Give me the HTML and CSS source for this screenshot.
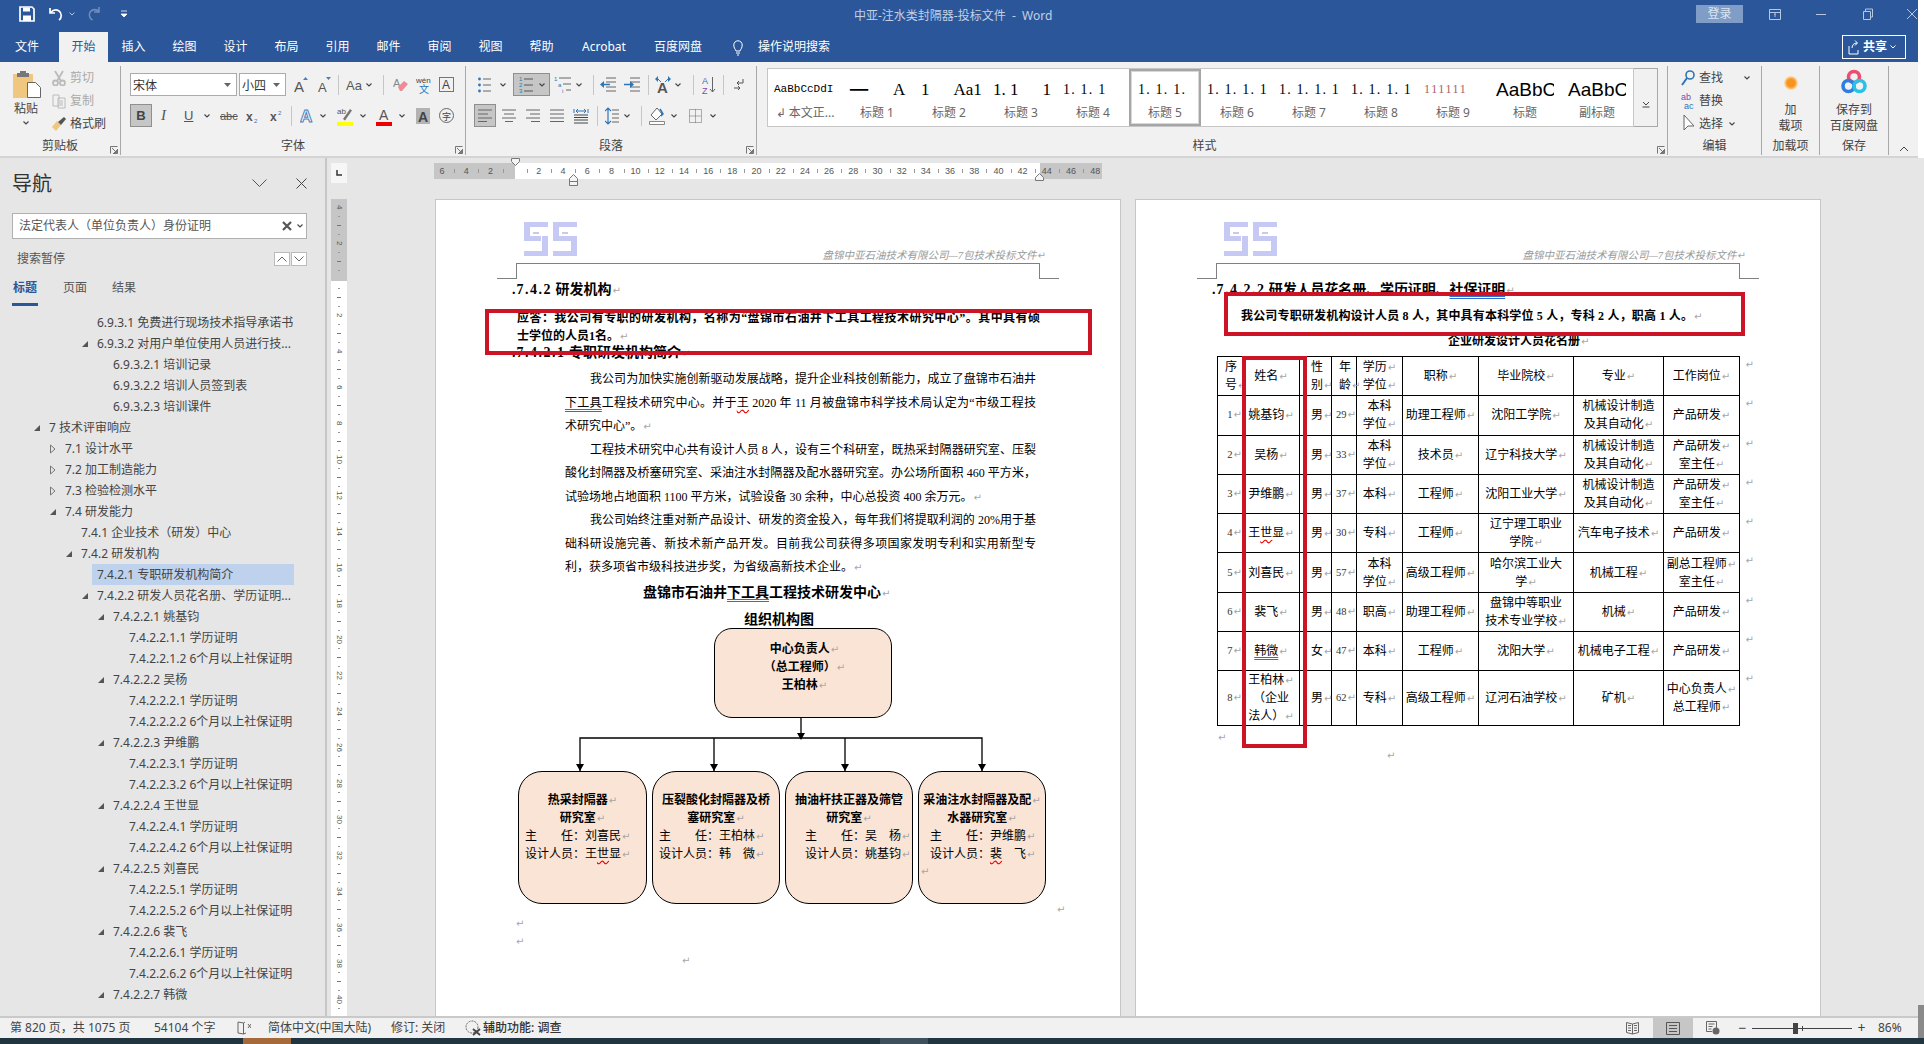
FILE: index.html
```html
<!DOCTYPE html>
<html lang="zh-CN">
<head>
<meta charset="utf-8">
<title>中亚-注水类封隔器-投标文件 - Word</title>
<link rel="stylesheet" href="styles.css">
</head>
<body>
<svg class="defs" width="0" height="0"><defs>
<symbol id="cv" viewBox="0 0 6 4"><path d="M.5.5 3 3 5.5.5" fill="none" stroke="#444" stroke-width="1.1"/></symbol>
<symbol id="lnc" viewBox="0 0 8 8"><path d="M.5 7.5V.5h7M7.5 3v4.5H3M2 2l4.5 4.5M6.5 4v2.500H4" fill="none" stroke="#666" stroke-width=".9"/></symbol>
<symbol id="fa" viewBox="0 0 8 8"><path d="M7 1v6H1z" fill="#555"/></symbol>
<symbol id="ho" viewBox="0 0 8 10"><path d="M1.500 1 6 5 1.500 9z" fill="none" stroke="#777"/></symbol>
<symbol id="logo" viewBox="0 0 53 34"><g fill="#c5c9f4"><path d="M0 0h24v5H6v9h11v5H0z"/><path d="M18 14h6v20H0v-5h18z"/><path d="M29 0h24v5H35v9h18v20H29v-5h18V19H29z"/><path d="M9 10h6v2H9zM38 10h6v2h-6z"/></g></symbol>
</defs></svg>
<div class="screen">
<div class="top">
<div class="app">

<header class="titlebar">
<svg class="ml19" width="16" height="16"><path d="M1 1h12l2 2v12H1z" fill="none" stroke="#fff" stroke-width="1.700"/><path d="M4 1.500h7v4H4zM4 9.500h8V15H4z" fill="#fff"/></svg>
<svg class="ml13" width="16" height="16"><path d="M2 2v5h5M2.500 6.500C5 4 8 3 11 5s3 7 0 9" fill="none" stroke="#fff" stroke-width="1.700"/></svg>
<svg class="ml5" width="6" height="4"><path d="M.5.500 3 3 5.500.500" fill="none" stroke="#b7c7e0"/></svg>
<svg class="ml12" width="15" height="16"><path d="M12 1v5H7M12 5.500C9.500 3 5.500 3 3.500 5.500s-1.500 6.500 2 8.500" fill="none" stroke="#6f8dba" stroke-width="1.600"/></svg>
<svg class="ml18" width="8" height="8"><path d="M1 1h6M1 4l3 3 3-3z" fill="#fff" stroke="#fff" stroke-width=".8"/></svg>
<div class="doc-title">中亚-注水类封隔器-投标文件 &nbsp;-&nbsp; Word</div>
<div class="login">登录</div>
<svg class="ml26" width="12" height="12"><path d="M.5 1.500h11v10H.5zM.5 4.500h11M5 6h2M6 6v3" fill="none" stroke="#b7c7e0"/></svg>
<svg class="ml34" width="12" height="12"><path d="M1 6.500h10" stroke="#b7c7e0"/></svg>
<svg class="ml34" width="12" height="12"><path d="M2.500 3.500h7v8h-7zM4.500 3.500V1h7v8H9.500" fill="none" stroke="#b7c7e0"/></svg>
<svg class="ml33" width="12" height="12"><path d="M1 1l10 10M11 1 1 11" stroke="#b7c7e0"/></svg>
</header>

<nav class="tabs">
<span class="tab t-file">文件</span><span class="tab t-home">开始</span>
<span class="tab">插入</span><span class="tab">绘图</span><span class="tab">设计</span><span class="tab">布局</span><span class="tab">引用</span><span class="tab">邮件</span><span class="tab">审阅</span><span class="tab">视图</span><span class="tab">帮助</span>
<span class="tab t-wide">Acrobat</span><span class="tab t-wide">百度网盘</span>
<svg class="ml18" width="10" height="17"><path d="M3 12C2 9.500.8 9 .8 6a4.200 4.200 0 0 1 8.400 0C9.200 9 8 9.500 7 12zM3 14h4M4 16h2" fill="none" stroke="#fff"/></svg>
<span class="tell">操作说明搜索</span>
<div class="share"><svg width="12" height="16"><path d="M1 7v8h9v-4M4 9c0-3 2-5 5-5M7 1.500 9.500 4 7 6.500" fill="none" stroke="#fff"/></svg><b>共享</b><svg width="6" height="4"><path d="M.5.500 3 3 5.500.500" fill="none" stroke="#fff"/></svg></div>
</nav>

<section class="ribbon">
<div class="grp g-clip">
<div class="gbody clip">
<div class="paste">
<svg width="28" height="27"><path d="M0 3h20v24H0z" fill="#efc77f"/><path d="M4 2h12v4H4z" fill="#777"/><path d="M7 0h6v3H7z" fill="#777"/><path d="M14.500 11.500h8l5 5v10h-13z" fill="#fff" stroke="#666"/></svg>
<span>粘贴</span>
<svg width="6" height="4"><use href="#cv"/></svg>
</div>
<div class="clip-r">
<div class="dim"><svg width="14" height="16"><g fill="none" stroke="#bbb" stroke-width="1.800"><circle cx="3.500" cy="13" r="2.500"/><circle cx="10.500" cy="13" r="2.500"/><path d="M3 1l6 10M11 1 5 11"/></g></svg><span>剪切</span></div>
<div class="dim"><svg width="14" height="16"><g fill="none" stroke="#bbb"><path d="M1 2h6v11H1zM6 5h7v10H6zM8 8h3M8 10h3M8 12h3"/></g></svg><span>复制</span></div>
<div><svg width="14" height="16"><path d="M0 11l5-6 4 4-5 6z" fill="#efc77f"/><path d="M6 6l6-5 2 2-5 6z" fill="#555"/></svg><span>格式刷</span></div>
</div>
</div>
<div class="glabel">剪贴板</div>
<svg class="launch" width="8" height="8"><use href="#lnc"/></svg>
</div>

<div class="grp g-font">
<div class="gbody">
<div class="r">
<div class="fbox w107"><span>宋体</span><svg width="7" height="4"><path d="M0 0h7L3.500 4z" fill="#666"/></svg></div>
<div class="fbox w47 ml2"><span>小四</span><svg width="7" height="4"><path d="M0 0h7L3.500 4z" fill="#666"/></svg></div>
<svg class="ml8" width="14" height="20"><text x="0" y="17" font-size="15" fill="#555">A</text><path d="M9 5l2.500-3L14 5z" fill="#4a7ebb"/></svg>
<svg class="ml10" width="13" height="20"><text x="0" y="17" font-size="13" fill="#555">A</text><path d="M8 2h5l-2.500 3z" fill="#4a7ebb"/></svg>
<i class="sp ml7"></i>
<svg class="ml7" width="17" height="20"><text x="0" y="15" font-size="13" fill="#555">Aa</text></svg>
<svg class="ml3" width="6" height="4"><use href="#cv"/></svg>
<i class="sp ml11"></i>
<svg class="ml9" width="15" height="18"><text x="0" y="11" font-size="11" fill="#888">A</text><path d="M5 11l6-6 4 3-6 7H7z" fill="#ee8b97"/></svg>
<svg class="ml8" width="15" height="20"><text x="0" y="8" font-size="8" fill="#444">wén</text><text x="3" y="18" font-size="10" fill="#2e75b6">文</text></svg>
<svg class="ml8" width="15" height="15"><rect x=".5" y=".5" width="14" height="14" fill="none" stroke="#4a7ebb"/><text x="3" y="12" font-size="12" fill="#444">A</text></svg>
</div>
<div class="r rg">
<div class="hl w22"><b class="bb">B</b></div>
<span class="ti ml9">I</span>
<span class="tu ml16">U</span>
<svg class="ml11" width="6" height="4"><use href="#cv"/></svg>
<span class="ts ml10">abc</span>
<svg class="ml10" width="12" height="16"><text x="0" y="13" font-size="12" font-weight="700" fill="#555">x</text><text x="8" y="15" font-size="6" fill="#2e75b6">2</text></svg>
<svg class="ml12" width="13" height="16"><text x="0" y="13" font-size="12" font-weight="700" fill="#555">x</text><text x="8" y="7" font-size="6" fill="#2e75b6">2</text></svg>
<i class="sp ml8"></i>
<svg class="ml8" width="14" height="18"><text x="0" y="15" font-size="17" fill="#fff" stroke="#4a7ebb" stroke-width="1" font-weight="700">A</text></svg>
<svg class="ml6" width="6" height="4"><use href="#cv"/></svg>
<svg class="ml11" width="16" height="20"><text x="0" y="8" font-size="8" fill="#555">ab</text><path d="M6 13 13 3l2 1.500-7 10z" fill="#777"/><path d="M0 16h16v4H0z" fill="#ff0"/></svg>
<svg class="ml7" width="6" height="4"><use href="#cv"/></svg>
<svg class="ml10" width="16" height="20"><text x="3" y="14" font-size="14" fill="#555">A</text><path d="M0 16h16v4H0z" fill="#e00"/></svg>
<svg class="ml7" width="6" height="4"><use href="#cv"/></svg>
<svg class="ml11" width="14" height="16"><rect width="14" height="16" fill="#b3b3b3"/><text x="2" y="13.500" font-size="14" font-weight="700" fill="#444">A</text></svg>
<svg class="ml9" width="15" height="15"><circle cx="7.500" cy="7.500" r="7" fill="none" stroke="#666"/><text x="3" y="11.500" font-size="9" fill="#444">字</text></svg>
</div>
</div>
<div class="glabel">字体</div>
<svg class="launch" width="8" height="8"><use href="#lnc"/></svg>
</div>

<div class="grp g-para">
<div class="gbody">
<div class="r">
<svg class="ml4" width="13" height="16"><g fill="#2e75b6"><circle cx="1.500" cy="2" r="1.400"/><circle cx="1.500" cy="8" r="1.400"/><circle cx="1.500" cy="14" r="1.400"/></g><path d="M5 2h8M5 8h8M5 14h8" stroke="#666"/></svg>
<svg class="ml9" width="6" height="4"><use href="#cv"/></svg>
<div class="hl w37 ml7"><svg width="15" height="17"><g font-size="6" fill="#2e75b6"><text x="0" y="5">1</text><text x="0" y="11">2</text><text x="0" y="17">3</text></g><path d="M5 3h9M5 9h9M5 15h9" stroke="#555"/></svg><svg width="6" height="4"><use href="#cv"/></svg></div>
<svg class="ml4" width="17" height="17"><g font-size="6" fill="#2e75b6"><text x="0" y="5">1</text><text x="4" y="11">a</text><text x="8" y="17">i</text></g><path d="M5 2h12M9 8h8M12 14h5" stroke="#666"/></svg>
<svg class="ml5" width="6" height="4"><use href="#cv"/></svg>
<i class="sp ml11"></i>
<svg class="ml6" width="16" height="15"><path d="M6 1h10M6 5h10M6 10h10M6 14h10" stroke="#666"/><path d="M0 7.500 4 4v7z" fill="#2e75b6"/><path d="M3 7.500h7" stroke="#2e75b6" stroke-width="1.500"/></svg>
<svg class="ml8" width="16" height="15"><path d="M6 1h10M6 5h10M6 10h10M6 14h10" stroke="#666"/><path d="M10 7.500 6 4v7z" fill="#2e75b6"/><path d="M0 7.500h7" stroke="#2e75b6" stroke-width="1.500"/></svg>
<i class="sp ml8"></i>
<svg class="ml6" width="16" height="20"><text x="2" y="18" font-size="15" font-weight="700" fill="#555">A</text><path d="M0 4l3-3v6zM16 4l-3-3v6z" fill="#2e75b6"/><path d="M3 4l3 3M13 4l-3 3" stroke="#2e75b6"/></svg>
<svg class="ml4" width="6" height="4"><use href="#cv"/></svg>
<i class="sp ml12"></i>
<svg class="ml8" width="14" height="20"><text x="0" y="9" font-size="9" fill="#2e75b6">A</text><text x="0" y="19" font-size="9" fill="#7c4bb0">Z</text><path d="M10.500 2v15M8 14l2.500 3 2.500-3" fill="none" stroke="#666"/></svg>
<i class="sp ml7"></i>
<svg class="ml10" width="10" height="16"><path d="M9 2v4H3M5 4 3 6l2 2M0 11h6M4 9l2 2-2 2" fill="none" stroke="#555"/></svg>
</div>
<div class="r rg">
<div class="hl w22"><svg width="14" height="13"><path d="M0 1h14M0 5h10M0 9h14M0 12.500h9" stroke="#666"/></svg></div>
<svg class="ml6" width="14" height="13"><path d="M0 1h14M2 5h10M0 9h14M3 12.500h8" stroke="#666"/></svg>
<svg class="ml10" width="14" height="13"><path d="M0 1h14M4 5h10M0 9h14M5 12.500h9" stroke="#666"/></svg>
<svg class="ml10" width="14" height="13"><path d="M0 1h14M0 5h14M0 9h14M0 12.500h14" stroke="#666"/></svg>
<svg class="ml9" width="16" height="16"><path d="M1 5v-4M15 5v-4" stroke="#2e75b6"/><path d="M3 3h10M3 3l2-2M3 3l2 2M13 3l-2-2M13 3l-2 2" stroke="#2e75b6" fill="none"/><path d="M1 7h14M1 9.500h14M1 12h14M1 15h14" stroke="#444"/></svg>
<i class="sp ml8"></i>
<svg class="ml7" width="14" height="18"><path d="M3 1v16M0 4l3-3 3 3M0 14l3 3 3-3" fill="none" stroke="#2e75b6" stroke-width="1.200"/><path d="M7 3h7M7 7h7M7 11h7M7 15h7" stroke="#666"/></svg>
<svg class="ml5" width="6" height="4"><use href="#cv"/></svg>
<i class="sp ml11"></i>
<svg class="ml7" width="16" height="18"><path d="M8 1 2 8l5 5 6-6z" fill="#fff" stroke="#666"/><path d="M11 2l3 5-2 2" fill="none" stroke="#2e75b6" stroke-width="1.500"/><path d="M.5 14.500h15v3H.5z" fill="#fff" stroke="#888"/></svg>
<svg class="ml6" width="6" height="4"><use href="#cv"/></svg>
<svg class="ml12" width="13" height="14"><path d="M.5.500h12v13H.5zM.5 7h12M6.500.500v13" fill="none" stroke="#666" stroke-dasharray="1 1"/></svg>
<svg class="ml8" width="6" height="4"><use href="#cv"/></svg>
</div>
</div>
<div class="glabel">段落</div>
<svg class="launch" width="8" height="8"><use href="#lnc"/></svg>
</div>

<div class="grp g-style">
<div class="gbody gal-row">
<div class="gallery">
<div class="cell"><div class="smp s-mono">AaBbCcDdI</div><div class="cap">↲ 本文正...</div></div>
<div class="cell"><div class="smp s-big s-two"><span class="cjk">一</span><span class="gp">A</span></div><div class="cap">标题 1</div></div>
<div class="cell"><div class="smp s-big s-two"><span>1</span><span class="gp">Aa1</span></div><div class="cap">标题 2</div></div>
<div class="cell"><div class="smp s-big s-two"><span>1. 1</span><span class="gp">1</span></div><div class="cap">标题 3</div></div>
<div class="cell"><div class="smp s-num">1. 1. 1</div><div class="cap">标题 4</div></div>
<div class="cell on"><div class="smp s-num">1. 1. 1. 1</div><div class="cap">标题 5</div></div>
<div class="cell"><div class="smp s-num">1. 1. 1. 1</div><div class="cap">标题 6</div></div>
<div class="cell"><div class="smp s-num">1. 1. 1. 1</div><div class="cap">标题 7</div></div>
<div class="cell"><div class="smp s-num">1. 1. 1. 1</div><div class="cap">标题 8</div></div>
<div class="cell"><div class="smp s-red">111111</div><div class="cap">标题 9</div></div>
<div class="cell"><div class="smp s-aa">AaBbCc</div><div class="cap">标题</div></div>
<div class="cell"><div class="smp s-aa">AaBbCc</div><div class="cap">副标题</div></div>
</div>
<div class="gscroll"><svg width="8" height="8"><path d="M.5 7h7M1 2l3 3 3-3" fill="none" stroke="#444"/></svg></div>
</div>
<div class="glabel gl-style">样式</div>
<svg class="launch" width="8" height="8"><use href="#lnc"/></svg>
</div>

<div class="grp g-edit">
<div class="gbody edit">
<div><svg width="14" height="18"><circle cx="9" cy="6" r="4" fill="none" stroke="#2e75b6" stroke-width="1.600"/><path d="M6 9l-5 7" stroke="#2e75b6" stroke-width="2"/></svg><span>查找</span><svg class="ml17" width="6" height="4"><use href="#cv"/></svg></div>
<div><svg width="14" height="20"><text x="0" y="9" font-size="9" fill="#7c4bb0">ab</text><text x="3" y="18" font-size="9" fill="#2e75b6">ac</text></svg><span>替换</span></div>
<div><svg width="14" height="20"><path d="M3 1v15l4-4h6z" fill="#fff" stroke="#666"/></svg><span>选择</span><svg class="ml2" width="6" height="4"><use href="#cv"/></svg></div>
</div>
<div class="glabel">编辑</div>
</div>

<div class="grp g-add">
<div class="gbody big">
<svg width="16" height="30"><defs><radialGradient id="o"><stop offset=".55" stop-color="#f7941d"/><stop offset="1" stop-color="#fde1b8"/></radialGradient></defs><circle cx="8" cy="15" r="7" fill="url(#o)"/></svg>
<span>加<br>载项</span>
</div>
<div class="glabel">加载项</div>
</div>

<div class="grp g-save">
<div class="gbody big">
<svg width="26" height="30"><g fill="none" stroke-width="3.600"><circle cx="13" cy="9" r="5.500" stroke="#ee4d6e"/><circle cx="7.500" cy="18" r="5.500" stroke="#2e7de1"/><circle cx="18.500" cy="18" r="5.500" stroke="#27c2e8"/></g></svg>
<span>保存到<br>百度网盘</span>
</div>
<div class="glabel">保存</div>
</div>
<svg class="collapse" width="10" height="6"><path d="M1 5l4-4 4 4" fill="none" stroke="#444"/></svg>
</section>

<main class="main">
<aside class="navpane">
<div class="nv-head"><span class="nv-title">导航</span><svg class="nv-ch" width="15" height="8"><path d="M.5.500 7.500 7.500l7-7" fill="none" stroke="#555"/></svg><svg class="nv-x" width="11" height="11"><path d="M.5.500l10 10M10.500.500l-10 10" stroke="#444"/></svg></div>
<div class="nv-search"><span>法定代表人（单位负责人）身份证明</span><svg width="10" height="10"><path d="M1 1l8 8M9 1 1 9" stroke="#555" stroke-width="2.200"/></svg><svg width="6" height="4"><use href="#cv"/></svg></div>
<div class="nv-pause"><span>搜索暂停</span><i class="nv-btn"><svg width="10" height="6"><path d="M.5 5.500 5 1l4.500 4.500" fill="none" stroke="#666"/></svg></i><i class="nv-btn"><svg width="10" height="6"><path d="M.5.500 5 5l4.500-4.500" fill="none" stroke="#666"/></svg></i></div>
<div class="nv-tabs"><span class="on">标题</span><span>页面</span><span>结果</span></div>
<div class="tree">
<div class="tn x97"><i class="tw"></i><span>6.9.3.1 免费进行现场技术指导承诺书</span></div>
<div class="tn x97"><i class="tw"><svg width="8" height="8"><use href="#fa"/></svg></i><span>6.9.3.2 对用户单位使用人员进行技...</span></div>
<div class="tn x113"><i class="tw"></i><span>6.9.3.2.1 培训记录</span></div>
<div class="tn x113"><i class="tw"></i><span>6.9.3.2.2 培训人员签到表</span></div>
<div class="tn x113"><i class="tw"></i><span>6.9.3.2.3 培训课件</span></div>
<div class="tn x49"><i class="tw"><svg width="8" height="8"><use href="#fa"/></svg></i><span>7 技术评审响应</span></div>
<div class="tn x65"><i class="tw"><svg width="8" height="10"><use href="#ho"/></svg></i><span>7.1 设计水平</span></div>
<div class="tn x65"><i class="tw"><svg width="8" height="10"><use href="#ho"/></svg></i><span>7.2 加工制造能力</span></div>
<div class="tn x65"><i class="tw"><svg width="8" height="10"><use href="#ho"/></svg></i><span>7.3 检验检测水平</span></div>
<div class="tn x65"><i class="tw"><svg width="8" height="8"><use href="#fa"/></svg></i><span>7.4 研发能力</span></div>
<div class="tn x81"><i class="tw"></i><span>7.4.1 企业技术（研发）中心</span></div>
<div class="tn x81"><i class="tw"><svg width="8" height="8"><use href="#fa"/></svg></i><span>7.4.2 研发机构</span></div>
<div class="tn x97"><i class="tw"></i><span class="sel">7.4.2.1 专职研发机构简介</span></div>
<div class="tn x97"><i class="tw"><svg width="8" height="8"><use href="#fa"/></svg></i><span>7.4.2.2 研发人员花名册、学历证明...</span></div>
<div class="tn x113"><i class="tw"><svg width="8" height="8"><use href="#fa"/></svg></i><span>7.4.2.2.1 姚基钧</span></div>
<div class="tn x129"><i class="tw"></i><span>7.4.2.2.1.1 学历证明</span></div>
<div class="tn x129"><i class="tw"></i><span>7.4.2.2.1.2 6个月以上社保证明</span></div>
<div class="tn x113"><i class="tw"><svg width="8" height="8"><use href="#fa"/></svg></i><span>7.4.2.2.2 吴杨</span></div>
<div class="tn x129"><i class="tw"></i><span>7.4.2.2.2.1 学历证明</span></div>
<div class="tn x129"><i class="tw"></i><span>7.4.2.2.2.2 6个月以上社保证明</span></div>
<div class="tn x113"><i class="tw"><svg width="8" height="8"><use href="#fa"/></svg></i><span>7.4.2.2.3 尹维鹏</span></div>
<div class="tn x129"><i class="tw"></i><span>7.4.2.2.3.1 学历证明</span></div>
<div class="tn x129"><i class="tw"></i><span>7.4.2.2.3.2 6个月以上社保证明</span></div>
<div class="tn x113"><i class="tw"><svg width="8" height="8"><use href="#fa"/></svg></i><span>7.4.2.2.4 王世显</span></div>
<div class="tn x129"><i class="tw"></i><span>7.4.2.2.4.1 学历证明</span></div>
<div class="tn x129"><i class="tw"></i><span>7.4.2.2.4.2 6个月以上社保证明</span></div>
<div class="tn x113"><i class="tw"><svg width="8" height="8"><use href="#fa"/></svg></i><span>7.4.2.2.5 刘喜民</span></div>
<div class="tn x129"><i class="tw"></i><span>7.4.2.2.5.1 学历证明</span></div>
<div class="tn x129"><i class="tw"></i><span>7.4.2.2.5.2 6个月以上社保证明</span></div>
<div class="tn x113"><i class="tw"><svg width="8" height="8"><use href="#fa"/></svg></i><span>7.4.2.2.6 裴飞</span></div>
<div class="tn x129"><i class="tw"></i><span>7.4.2.2.6.1 学历证明</span></div>
<div class="tn x129"><i class="tw"></i><span>7.4.2.2.6.2 6个月以上社保证明</span></div>
<div class="tn x113"><i class="tw"><svg width="8" height="8"><use href="#fa"/></svg></i><span>7.4.2.2.7 韩微</span></div>
</div>
</aside>

<div class="ws">
<div class="hrow">
<div class="corner"><svg width="8" height="8"><path d="M2 1v5h5" fill="none" stroke="#333" stroke-width="1.500"/></svg></div>
<div class="hruler">
<div class="hscale">
<span class="hc first">6</span><span class="hc">4</span><span class="hc">2</span><span class="hc"></span><span class="hc">2</span><span class="hc">4</span><span class="hc">6</span><span class="hc">8</span><span class="hc">10</span><span class="hc">12</span><span class="hc">14</span><span class="hc">16</span><span class="hc">18</span><span class="hc">20</span><span class="hc">22</span><span class="hc">24</span><span class="hc">26</span><span class="hc">28</span><span class="hc">30</span><span class="hc">32</span><span class="hc">34</span><span class="hc">36</span><span class="hc">38</span><span class="hc">40</span><span class="hc">42</span><span class="hc">44</span><span class="hc">46</span><span class="hc">48</span>
</div>
<svg class="mk mk1" width="9" height="8"><path d="M.5.500h8v3l-4 4-4-4z" fill="#f5f5f5" stroke="#777"/></svg>
<svg class="mk mk2" width="9" height="14"><path d="M.5 6.500l4-4 4 4v3h-8zM.5 9.500h8v4h-8z" fill="#f5f5f5" stroke="#777"/></svg>
<svg class="mk mk3" width="9" height="8"><path d="M.5 7.500v-3l4-4 4 4v3z" fill="#f5f5f5" stroke="#777"/></svg>
</div>
</div>
<div class="prow">
<div class="vruler">
<span class="vc">4</span><span class="vc">2</span><span class="vc"></span><span class="vc">2</span><span class="vc">4</span><span class="vc">6</span><span class="vc">8</span><span class="vc">10</span><span class="vc">12</span><span class="vc">14</span><span class="vc">16</span><span class="vc">18</span><span class="vc">20</span><span class="vc">22</span><span class="vc">24</span><span class="vc">26</span><span class="vc">28</span><span class="vc">30</span><span class="vc">32</span><span class="vc">34</span><span class="vc">36</span><span class="vc">38</span><span class="vc">40</span>
</div>
<article class="page p1">
<div class="phead"><svg class="plogo" width="53" height="34"><use href="#logo"/></svg><span class="ptext">盘锦中亚石油技术有限公司—7包技术投标文件<i class="pm">↵</i></span></div>
<div class="crop"></div>
<div class="content">
<h2 class="h2"><b class="dot">.</b><span class="ls">7.4.2</span> 研发机构<i class="pm">↵</i></h2>
<p class="ans j">应答：我公司有专职的研发机构，名称为“盘锦市石油井下工具工程技术研究中心”。其中具有硕</p>
<p class="ans2">士学位的人员1名。<i class="pm">↵</i></p>
<h3 class="h3"><b class="dot">.</b><span class="ls">7.4.2.1</span> 专职研发机构简介<i class="pm">↵</i></h3>
<div class="bodyt">
<p class="j ind">我公司为加快实施创新驱动发展战略，提升企业科技创新能力，成立了盘锦市石油井</p>
<p class="j"><u class="dbl">下工具</u>工程技术研究中心。并于<u class="wv">王</u> 2020 年 11 月被盘锦市科学技术局认定为“市级工程技</p>
<p>术研究中心”。<i class="pm">↵</i></p>
<p class="j ind">工程技术研究中心共有设计人员 8 人，设有三个科研室，既热采封隔器研究室、压裂</p>
<p class="j">酸化封隔器及桥塞研究室、采油注水封隔器及配水器研究室。办公场所面积 460 平方米，</p>
<p>试验场地占地面积 1100 平方米，试验设备 30 余种，中心总投资 400 余万元。<i class="pm">↵</i></p>
<p class="j ind">我公司始终注重对新产品设计、研发的资金投入，每年我们将提取利润的 20%用于基</p>
<p class="j">础科研设施完善、新技术新产品开发。目前我公司获得多项国家发明专利和实用新型专</p>
<p>利，获多项省市级科技进步奖，为省级高新技术企业。<i class="pm">↵</i></p>
</div>
<p class="ot">盘锦市石油井<u class="dbl">下工具</u>工程技术研发中心<i class="pm">↵</i></p>
<p class="ot ot2">组织机构图</p>
</div>
<div class="org">
<svg class="wires" width="684" height="170"><g fill="none" stroke="#000" stroke-width="1.300"><path d="M365 90v21M144 144v-33h402v33M278 111v33M409 111v33"/></g><g fill="#000"><path d="M361 106h8l-4 7zM140 137h8l-4 7zM274 137h8l-4 7zM405 137h8l-4 7zM542 137h8l-4 7z"/></g></svg>
<div class="node n0"><p>中心负责人<i class="pm">↵</i></p><p>（总工程师）<i class="pm">↵</i></p><p>王柏林<i class="pm">↵</i></p></div>
<div class="node nb n1"><p>热采封隔器<i class="pm">↵</i></p><p>研究室<i class="pm">↵</i></p><div class="who">主　　任：刘喜民<i class="pm">↵</i></div><div class="who">设计人员：王<u class="wv">世</u>显<i class="pm">↵</i></div></div>
<div class="node nb n2"><p>压裂酸化封隔器及桥</p><p>塞研究室<i class="pm">↵</i></p><div class="who">主　　任：王柏林<i class="pm">↵</i></div><div class="who">设计人员：韩　微<i class="pm">↵</i></div></div>
<div class="node nb n3"><p>抽油杆扶正器及筛管</p><p>研究室<i class="pm">↵</i></p><div class="who">主　　任：吴　杨<i class="pm">↵</i></div><div class="who">设计人员：姚基钧<i class="pm">↵</i></div></div>
<div class="node nb n4"><p>采油注水封隔器及配<i class="pm">↵</i></p><p>水器研究室<i class="pm">↵</i></p><div class="who">主　　任：尹维鹏<i class="pm">↵</i></div><div class="who">设计人员：<u class="wv">裴</u>　飞<i class="pm">↵</i></div></div>
<i class="pm om1">↵</i><i class="pm om2">↵</i><i class="pm om3">↵</i><i class="pm om4">↵</i><i class="pm om5">↵</i>
</div>
<div class="redbox rb1"></div>
</article>
<article class="page p2">
<div class="phead"><svg class="plogo" width="53" height="34"><use href="#logo"/></svg><span class="ptext">盘锦中亚石油技术有限公司—7包技术投标文件<i class="pm">↵</i></span></div>
<div class="crop"></div>
<div class="content">
<h2 class="h2 h2b"><b class="dot">.</b><span class="ls">7.4.2.2</span> 研发人员花名册、学历证明、<u class="dbl">社保证明</u><i class="pm">↵</i></h2>
<p class="ans3">我公司专职研发机构设计人员 8 人，其中具有本科学位 5 人，专科 2 人，职高 1 人。<i class="pm">↵</i></p>
<p class="tt">企业研发设计人员花名册<i class="pm">↵</i></p>
<table class="tbl">
<colgroup><col class="c1"><col class="c2"><col class="c3"><col class="c4"><col class="c5"><col class="c6"><col class="c7"><col class="c8"><col class="c9"></colgroup>
<tr class="r39"><td class="lf7">序<br>号<i class="pm">↵</i></td><td>姓名<i class="pm">↵</i></td><td class="lf11">性<br>别<i class="pm">↵</i></td><td class="lf7">年<br>龄<i class="pm">↵</i></td><td>学历<i class="pm">↵</i><br>学位<i class="pm">↵</i></td><td>职称<i class="pm">↵</i></td><td>毕业院校<i class="pm">↵</i></td><td>专业<i class="pm">↵</i></td><td>工作岗位<i class="pm">↵</i></td></tr>
<tr class="r40"><td class="no">1<i class="pm">↵</i></td><td>姚基钧<i class="pm">↵</i></td><td class="lf11">男<i class="pm">↵</i></td><td class="no">29<i class="pm">↵</i></td><td>本科<br>学位<i class="pm">↵</i></td><td>助理工程师<i class="pm">↵</i></td><td>沈阳工学院<i class="pm">↵</i></td><td>机械设计制造<br>及其自动化<i class="pm">↵</i></td><td>产品研发<i class="pm">↵</i></td></tr>
<tr class="r39"><td class="no">2<i class="pm">↵</i></td><td>吴杨<i class="pm">↵</i></td><td class="lf11">男<i class="pm">↵</i></td><td class="no">33<i class="pm">↵</i></td><td>本科<br>学位<i class="pm">↵</i></td><td>技术员<i class="pm">↵</i></td><td>辽宁科技大学<i class="pm">↵</i></td><td>机械设计制造<br>及其自动化<i class="pm">↵</i></td><td>产品研发<i class="pm">↵</i><br>室主任<i class="pm">↵</i></td></tr>
<tr class="r40"><td class="no">3<i class="pm">↵</i></td><td>尹维鹏<i class="pm">↵</i></td><td class="lf11">男<i class="pm">↵</i></td><td class="no">37<i class="pm">↵</i></td><td>本科<i class="pm">↵</i></td><td>工程师<i class="pm">↵</i></td><td>沈阳工业大学<i class="pm">↵</i></td><td>机械设计制造<br>及其自动化<i class="pm">↵</i></td><td>产品研发<i class="pm">↵</i><br>室主任<i class="pm">↵</i></td></tr>
<tr class="r39"><td class="no">4<i class="pm">↵</i></td><td>王<u class="wv">世</u>显<i class="pm">↵</i></td><td class="lf11">男<i class="pm">↵</i></td><td class="no">30<i class="pm">↵</i></td><td>专科<i class="pm">↵</i></td><td>工程师<i class="pm">↵</i></td><td>辽宁理工职业<br>学院<i class="pm">↵</i></td><td>汽车电子技术<i class="pm">↵</i></td><td>产品研发<i class="pm">↵</i></td></tr>
<tr class="r40"><td class="no">5<i class="pm">↵</i></td><td>刘喜民<i class="pm">↵</i></td><td class="lf11">男<i class="pm">↵</i></td><td class="no">57<i class="pm">↵</i></td><td>本科<br>学位<i class="pm">↵</i></td><td>高级工程师<i class="pm">↵</i></td><td>哈尔滨工业大<br>学<i class="pm">↵</i></td><td>机械工程<i class="pm">↵</i></td><td>副总工程师<i class="pm">↵</i><br>室主任<i class="pm">↵</i></td></tr>
<tr class="r39"><td class="no">6<i class="pm">↵</i></td><td>裴飞<i class="pm">↵</i></td><td class="lf11">男<i class="pm">↵</i></td><td class="no">48<i class="pm">↵</i></td><td>职高<i class="pm">↵</i></td><td>助理工程师<i class="pm">↵</i></td><td>盘锦中等职业<br>技术专业学校<i class="pm">↵</i></td><td>机械<i class="pm">↵</i></td><td>产品研发<i class="pm">↵</i></td></tr>
<tr class="r39"><td class="no">7<i class="pm">↵</i></td><td><u class="dbl">韩微</u><i class="pm">↵</i></td><td class="lf11">女<i class="pm">↵</i></td><td class="no">47<i class="pm">↵</i></td><td>本科<i class="pm">↵</i></td><td>工程师<i class="pm">↵</i></td><td>沈阳大学<i class="pm">↵</i></td><td>机械电子工程<i class="pm">↵</i></td><td>产品研发<i class="pm">↵</i></td></tr>
<tr class="r55"><td class="no">8<i class="pm">↵</i></td><td>王柏林<i class="pm">↵</i><br>（企业<br>法人）<i class="pm">↵</i></td><td class="lf11">男<i class="pm">↵</i></td><td class="no">62<i class="pm">↵</i></td><td>专科<i class="pm">↵</i></td><td>高级工程师<i class="pm">↵</i></td><td>辽河石油学校<i class="pm">↵</i></td><td>矿机<i class="pm">↵</i></td><td>中心负责人<i class="pm">↵</i><br>总工程师<i class="pm">↵</i></td></tr>
</table>
<p class="after"><i class="pm">↵</i></p>
<p class="after a2"><i class="pm">↵</i></p>
</div>
<div class="redbox rb2"></div>
<div class="redbox rb3"></div>
</article>
</div>
</div>
</main>

<footer class="status">
<span class="s1">第 820 页，共 1075 页</span>
<span class="s2">54104 个字</span>
<svg class="s3" width="14" height="14"><path d="M6.500 2 1 1v11l5.500 1zM6.500 2 8 1M11 3l3 4M14 3l-3 4M9 12l-2.500 1" fill="none" stroke="#666"/></svg>
<span class="s4">简体中文(中国大陆)</span>
<span class="s5">修订: 关闭</span>
<svg class="s6" width="17" height="16"><circle cx="8" cy="7" r="6" fill="none" stroke="#666" stroke-dasharray="2 1"/><path d="M9 9l7 6M16 9l-7 6" stroke="#444" stroke-width="1.800"/></svg>
<span class="s7">辅助功能: 调查</span>
<div class="s-right">
<svg width="13" height="14"><path d="M.5 1.500 6.500 3l6-1.500v10l-6 1.500-6-1.500zM6.500 3v10M2 4.500h3M2 7h3M2 9.500h3M8 4.500h3M8 7h3M8 9.500h3" fill="none" stroke="#666"/></svg>
<div class="vw-on"><svg width="14" height="13"><path d="M.5.500h13v12H.5zM3 3.500h8M3 6.500h8M3 9.500h8" fill="none" stroke="#555"/></svg></div>
<svg class="ml13" width="14" height="14"><path d="M.5.500h10V7M.5.500v10H6M2.500 3h6M2.500 5.500h4M2.500 8h3" fill="none" stroke="#666"/><circle cx="10" cy="10" r="3.500" fill="#666"/></svg>
<span class="zm ml18">−</span>
<div class="slider ml5"><i class="thumb"></i><i class="tick"></i></div>
<span class="zm ml5">+</span>
<span class="pct">86%</span>
</div>
</footer>

</div>
<div class="strip"></div>
</div>
<div class="taskbar"><i class="tk1"></i><i class="tk2"></i></div>
</div>
</body>
</html>
```
FILE: styles.css
```css
*{box-sizing:border-box}
html,body{margin:0;padding:0;height:100%;overflow:hidden}
body{font:12px/16px "Noto Sans","Noto Sans CJK SC",sans-serif;color:#444;background:#e6e6e6}
svg{display:block;flex:none}
svg text{font-family:"Liberation Sans","Noto Sans CJK SC",sans-serif}
i{font-style:normal}
p,h2,h3{margin:0}
.defs{position:absolute}
.screen{width:1924px;height:1044px;display:flex;flex-direction:column}
.top{height:1038px;display:flex}
.app{width:1918px;display:flex;flex-direction:column}
.strip{width:6px;background:linear-gradient(#fff 0,#fff 158px,#e6e6e6 158px,#e6e6e6 1005px,#8a8a8a 1005px)}
.taskbar{height:6px;background:#213540;display:flex}
.tk1{margin-left:243px;width:48px;background:#a5693a}
.tk2{margin-left:589px;width:48px;background:#3e505c}

.ml2{margin-left:2px}.ml3{margin-left:3px}.ml4{margin-left:4px}.ml5{margin-left:5px}.ml6{margin-left:6px}.ml7{margin-left:7px}.ml8{margin-left:8px}.ml9{margin-left:9px}.ml10{margin-left:10px}.ml11{margin-left:11px}.ml12{margin-left:12px}.ml13{margin-left:13px}.ml16{margin-left:16px}.ml17{margin-left:17px}.ml18{margin-left:18px}.ml19{margin-left:19px}.ml26{margin-left:26px}.ml33{margin-left:33px}.ml34{margin-left:34px}

.titlebar{height:32px;background:#2b579a;display:flex;align-items:center}
.doc-title{margin-left:726px;flex:1;color:#c2cfe4;white-space:nowrap}
.login{width:47px;height:18px;line-height:18px;margin-top:-4px;background:#7f9dc7;color:#dbe5f3;text-align:center}
.titlebar svg{margin-top:-4px}

.tabs{height:30px;background:#2b579a;display:flex;align-items:center;color:#fff}
.tab{width:51px;height:30px;line-height:30px;text-align:center;flex:none}
.t-file{width:59px;padding-right:5px}
.t-home{width:49px;background:#f1f1f1;color:#2b579a}
.t-wide{width:74px}
.tell{margin-left:15px}
.share{margin-left:auto;margin-right:12px;width:64px;height:24px;border:1px solid #fff;display:flex;align-items:center;padding-left:5px;gap:3px}
.share b{font-weight:700}

.ribbon{height:96px;background:#f1f1f1;border-bottom:2px solid #d4d4d4;display:flex}
.grp{position:relative;display:flex;flex-direction:column;border-right:1px solid #a8a8a8;height:89px;margin-top:4px;flex:none}
.gbody{height:71px;flex:none}
.glabel{text-align:center;line-height:18px;height:18px;color:#444}
.launch{position:absolute;right:2px;bottom:1px}
.g-clip{width:121px}
.g-font{width:345px}
.g-para{width:291px}
.g-style{width:911px}
.g-edit{width:94px}
.g-add{width:58px}
.g-save{width:69px}
.collapse{align-self:flex-end;margin:0 0 4px 10px}

.clip{display:flex;padding-top:5px;position:relative}
.paste{width:52px;display:flex;flex-direction:column;align-items:center}
.paste svg:first-child{margin-left:2px}
.paste span{line-height:18px;margin-top:2px}
.paste svg:last-child{margin-top:3px}
.clip-r{margin-top:-5px}
.clip-r>div{height:23px;display:flex;align-items:center;gap:4px}
.dim{color:#aaa}

.g-font .gbody{padding:7px 0 0 9px}
.g-para .gbody{padding:7px 0 0 8px}
.r{display:flex;align-items:center;height:23px}
.rg{margin-top:8px}
.sp{width:1px;height:20px;background:#c6c6c6;flex:none}
.fbox{height:23px;background:#fff;border:1px solid #ababab;display:flex;align-items:center;justify-content:space-between;padding:0 5px 0 2px;color:#333;font-family:"Noto Sans CJK SC",sans-serif}
.w107{width:107px}.w47{width:47px}
.hl{height:23px;background:#c6c6c6;border:1px solid #8f8f8f;display:flex;align-items:center;justify-content:center;gap:5px;flex:none}
.w22{width:22px}.w37{width:37px}
.bb{font:700 13px "Liberation Sans",sans-serif;color:#444}
.ti{font:italic 15px "Liberation Serif",serif;width:7px;color:#555}
.tu{font:13px "Liberation Sans",sans-serif;text-decoration:underline;width:9px;color:#555}
.ts{font:11px "Liberation Sans",sans-serif;text-decoration:line-through;width:16px;color:#555}

.gal-row{display:flex;padding:2px 0 0 10px}
.gallery{width:867px;height:59px;background:#fff;border:1px solid #c6c6c6;display:flex;padding-left:1px}
.cell{width:72px;height:57px;flex:none;padding-top:4px;overflow:hidden}
.cell.on{outline:2px solid #a6a6a6;outline-offset:-2px;border:3px solid #d8d8d8;padding-top:1px}
.smp{height:33px;line-height:33px;white-space:nowrap;overflow:hidden;padding:0 5px;color:#000;font-family:"Liberation Serif",serif}
.s-mono{font:11px/33px "Liberation Mono",monospace}
.s-big{font-size:17px}
.s-two{padding-left:8px;display:flex;align-items:center}
.cjk{font-family:"Noto Sans CJK SC",sans-serif;font-size:20px}
.gp{margin-left:24px;flex:none}
.s-num{font-size:14px;letter-spacing:1.200px;padding:0;margin:0 6px}
.s-red{font-size:12px;letter-spacing:1.600px;color:#a65e68;padding-left:7px}
.s-aa{font:19px/33px "Liberation Sans",sans-serif;padding:0;margin:0 7px}
.cap{text-align:center;line-height:14px;color:#666}
.gscroll{width:24px;height:59px;background:#f1f1f1;border:1px solid #a8a8a8;border-left:0;display:flex;align-items:center;justify-content:center;padding-top:12px}
.gl-style{padding-right:15px}

.edit{padding:0 0 0 13px}
.edit>div{height:23px;display:flex;align-items:center;gap:4px}
.big{display:flex;flex-direction:column;align-items:center;padding-top:2px;text-align:center}
.big span{line-height:16px;margin-top:4px}

.main{flex:1;display:flex;min-height:0}
.navpane{width:327px;border-right:2px solid #c6c6c6;flex:none;overflow:hidden;padding:10px 0 0 0;color:#444}
.nv-head{height:30px;display:flex;align-items:center;padding-left:12px}
.nv-title{font-size:20px;color:#333;font-family:"Noto Sans CJK SC",sans-serif;line-height:30px;white-space:nowrap;flex:none}
.nv-ch{margin-left:200px}
.nv-x{margin-left:29px}
.nv-search{margin:15px 0 0 12px;width:295px;height:26px;background:#fff;border:1px solid #b0b0b0;display:flex;align-items:center;padding-left:6px;gap:5px;color:#555}
.nv-search span{flex:1}
.nv-search svg:last-child{margin-right:3px}
.nv-pause{margin:12px 0 0 17px;height:16px;width:290px;display:flex;align-items:center;gap:1px}
.nv-pause span{flex:1;color:#555}
.nv-btn{width:16px;height:14px;background:#fff;border:1px solid #bbb;display:flex;align-items:center;justify-content:center}
.nv-tabs{margin:12px 0 0 12px;height:27px;display:flex;gap:25px;color:#555;line-height:18px}
.nv-tabs span:first-child{padding:0 1px}
.nv-tabs .on{color:#2b579a;font-weight:700;border-bottom:3px solid #2b579a;height:27px;width:26px;text-align:center}
.tree{margin-top:6px;width:294px}
.tn{height:21px;line-height:21px;display:flex;white-space:nowrap;color:#444}
.tw{width:16px;flex:none;display:flex;align-items:center;padding-left:0}
.x49{padding-left:33px}.x65{padding-left:49px}.x81{padding-left:65px}.x97{padding-left:81px}.x113{padding-left:97px}.x129{padding-left:113px}
.sel{flex:1;margin-left:-5px;padding-left:5px;background:#bed2ee}

.ws{flex:1;min-width:0;display:flex;flex-direction:column;overflow:hidden}
.hrow{height:41px;padding:5px 0 0 4px;display:flex;flex:none}
.corner{width:16px;height:20px;background:#f6f6f6;display:flex;align-items:center;justify-content:center}
.hruler{margin-left:87px;width:668px;height:16px;position:relative}
.hscale{height:16px;overflow:hidden;display:flex;background:linear-gradient(90deg,#c6c6c6 81px,#fff 81px,#fff 606px,#c6c6c6 606px)}
.hc{width:24.2px;flex:none;text-align:center;font:9px/16px "Liberation Sans",sans-serif;color:#555;background:linear-gradient(#999,#999) 0 center/1px 4px no-repeat}
.first{margin-left:-4px}
.mk{position:absolute}
.mk1{left:77px;top:-5px}
.mk2{left:135px;top:9px}
.mk3{left:601px;top:10px}
.prow{flex:1;min-height:0;display:flex;align-items:flex-start}
.vruler{margin-left:4px;width:16px;height:817px;overflow:hidden;flex:none;background:linear-gradient(#c6c6c6 82px,#fff 82px);display:flex;flex-direction:column}
.vc{height:36px;flex:none;writing-mode:vertical-rl;text-align:center;font:8px/16px "Liberation Sans",sans-serif;color:#555;display:block;background:linear-gradient(#777,#777) center 0/4px 1px no-repeat,linear-gradient(#999,#999) center 9px/2px 1px no-repeat,linear-gradient(#999,#999) center 27px/2px 1px no-repeat}
.vc:first-child{margin-top:-10px}

.page{width:686px;height:818px;flex:none;background:#fff;border:1px solid #c6c6c6;border-bottom:0;position:relative;overflow:hidden;color:#000;font-family:"Liberation Serif","Noto Sans CJK SC",sans-serif}
.p1{margin-left:88px}
.p2{margin-left:14px}
.phead{height:63px;padding:22px 74px 0 88px;display:flex;justify-content:space-between;align-items:flex-end}
.plogo{align-self:flex-start}
.ptext{font-size:10.500px;line-height:13px;font-style:italic;color:#9a9a9a;white-space:nowrap;margin-bottom:1px}
.crop{margin:0 80px;height:16px;border:1px solid #808080;border-bottom:0;position:relative}
.crop::before,.crop::after{content:"";position:absolute;bottom:0;width:19px;border-top:1px solid #808080}
.crop::before{left:-20px}
.crop::after{right:-20px}
.content{padding:0 80px 0 81px}
.pm{font:normal 10px/1 "DejaVu Sans",sans-serif;color:#a6a6a6;text-decoration:none;margin-left:1px}
.h2{font-size:14px;line-height:22px;font-weight:700;white-space:nowrap}
.h3{font-size:14px;line-height:18px;margin-top:-1px;font-weight:700;white-space:nowrap}
.dot{margin-left:-5px;margin-right:1px}
.ls{letter-spacing:1.500px}
.ans{margin-top:8px;font-size:12px;line-height:18px;font-weight:700}
.ans2{font-size:12px;line-height:18px;font-weight:700}
.bodyt{margin:6px 4px 0 48px;font-size:12px;line-height:23.500px}
.bodyt p{white-space:nowrap}
.j{text-align:justify;text-align-last:justify}
.bodyt .j{white-space:normal}
.ind{text-indent:25px}
.dbl{text-decoration:underline double #2e6fd1;text-underline-offset:2px}
.wv{text-decoration:underline wavy #e00;text-underline-offset:2px}
.ot{font-size:14px;line-height:26px;font-weight:700;padding-left:126px;white-space:nowrap}
.ot2{padding-left:227px;position:relative;top:1px}
.org{position:relative;height:330px;margin-top:-5px;font-size:12px;line-height:18px}
.wires{position:absolute;left:0;top:0}
.node{position:absolute;background:#fae4d5;border:1.500px solid #000;border-radius:18px;text-align:center}
.n0{left:278px;top:1px;width:178px;height:90px;padding:11px 0 0 3px;font-weight:700}
.nb{top:144px;height:133px;width:128px;padding-top:19px;border-radius:24px}
.nb p{font-weight:700;white-space:nowrap}
.who{text-align:left;white-space:nowrap}
.n1{left:82px;width:129px}
.n1 .who,.n2 .who{padding-left:6px}
.n2{left:216px}
.n3{left:349px}
.n3 .who{padding-left:19px}
.n4{left:482px;border-radius:24px}
.n4 .who{padding-left:11px}
.om1,.om2,.om3,.om4,.om5{position:absolute}
.om1{left:79px;top:292px}
.om2{left:79px;top:310px}
.om3{left:245px;top:329px}
.om4{left:620px;top:278px}
.om5{left:484px;top:240px}
.redbox{position:absolute;border:4px solid #cc1426;pointer-events:none}
.rb1{left:49px;top:109px;width:607px;height:46px}
.rb2{left:88px;top:92px;width:521px;height:44px}
.rb3{left:106px;top:156px;width:65px;height:392px}
.content .h2b{letter-spacing:-.1px}
.ans3{margin:6px 0 0 24px;font-size:12px;line-height:18px;font-weight:700;white-space:nowrap;letter-spacing:.18px}
.tt{margin:7px 0 0 231px;font-size:12px;line-height:18px;font-weight:700;white-space:nowrap}
.tbl{margin-top:6px;border-collapse:collapse;table-layout:fixed;width:522px;font-size:12px;line-height:18px;text-align:center}
.tbl td{border:1px solid #000;padding:0;position:relative;white-space:nowrap}
.tbl td:last-child::after{content:"↵";position:absolute;right:-15px;top:3px;font:10px/1 "DejaVu Sans",sans-serif;color:#a6a6a6}
.c1{width:25px}.c2{width:57px}.c3{width:32px}.c4{width:25px}.c5{width:46px}.c6{width:76px}.c7{width:95px}.c8{width:90px}.c9{width:76px}
.r39{height:39.200px}.r40{height:39.400px}.r55{height:55px}
.tbl .lf7{text-align:left;padding-left:7px}
.tbl .lf11{text-align:left;padding-left:11px}
.tbl .no{text-align:right;font-size:10.500px;color:#333}
.after{height:18px;line-height:18px;margin-top:2px}
.a2{padding-left:169px;margin-top:0}

.status{height:22px;flex:none;background:#f1f1f1;border-top:2px solid #c9c9c9;display:flex;align-items:center;color:#444;line-height:20px;white-space:nowrap}
.s1{margin-left:10px;width:144px}
.s2{width:83px}
.s3{margin-right:17px}
.s4{width:123px}
.s5{width:73px}
.s6{margin-right:2px}
.s7{font-weight:500;color:#333}
.s-right{margin-left:auto;display:flex;align-items:center;padding-right:15px;height:20px}
.vw-on{margin-left:14px;width:40px;height:20px;background:#c6c6c6;display:flex;align-items:center;justify-content:center}
.zm{width:9px;text-align:center;font-size:14px;line-height:20px}
.slider{width:100px;height:1px;background:#444;position:relative}
.thumb{position:absolute;left:41px;top:-5px;width:5px;height:11px;background:#444}
.tick{position:absolute;left:50px;top:-2px;width:1px;height:5px;background:#444}
.pct{margin-left:12px;width:25px;font-size:12px}
```
